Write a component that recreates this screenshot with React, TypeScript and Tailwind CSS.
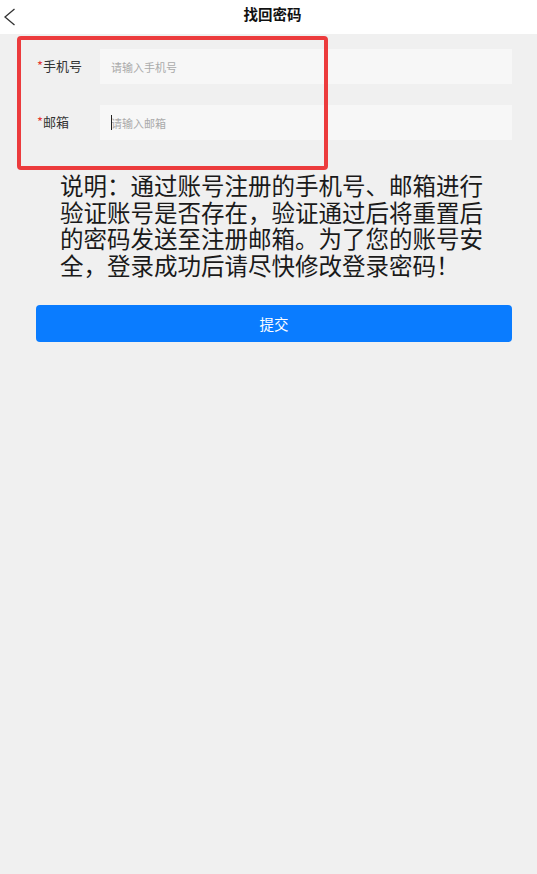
import React from "react";

const font = { fontFamily: '"Noto Sans CJK SC", "Noto Sans", sans-serif' };

function Field({ label, placeholder, focused }: { label: string; placeholder: string; focused?: boolean }) {
  return (
    <div className="flex items-center pl-[37px] pr-[25px]">
      <div className="w-[63px] shrink-0 pb-[3px] text-[13px] leading-none text-[#333]">
        <span className="text-[#e53935]">*</span>
        {label}
      </div>
      <div className="relative h-[35px] flex-1 bg-[#f7f7f7]">
        <input
          className="h-full w-full bg-transparent px-[11px] text-[11px] text-[#333] outline-none placeholder:text-[#aaaaaa]"
          placeholder={placeholder}
          style={font}
        />
        {focused && <span className="absolute left-[11px] top-[10px] h-[15px] w-px bg-[#222]" />}
      </div>
    </div>
  );
}

export default function App() {
  return (
    <div className="relative min-h-[874px] bg-[#f0f0f0]" style={font}>
      {/* nav bar */}
      <header className="grid h-[34px] grid-cols-[1fr_auto_1fr] items-center bg-white">
        <button className="flex h-full items-center pl-[3px]" aria-label="返回">
          <svg width="13" height="18" viewBox="0 0 13 18" fill="none">
            <polyline points="11.5,1 2,9 11.5,17" stroke="#333" strokeWidth="1.3" strokeLinejoin="miter" />
          </svg>
        </button>
        <h1 className="ml-[8px] pb-[6px] text-[14.5px] font-bold text-[#111]">找回密码</h1>
        <div />
      </header>

      <div className="flex flex-col gap-[21px] pt-[15px]">
        <Field label="手机号" placeholder="请输入手机号" />
        <Field label="邮箱" placeholder="请输入邮箱" focused />
      </div>

      <p className="ml-[60px] mt-[32px] w-[430px] text-[23.5px] leading-[26.5px] text-[#1a1a1a]">
        说明：通过账号注册的手机号、邮箱进行验证账号是否存在，验证通过后将重置后的密码发送至注册邮箱。为了您的账号安全，登录成功后请尽快修改登录密码！
      </p>

      <div className="mt-[27px] pl-[36px] pr-[25px]">
        <button className="h-[37px] w-full rounded-[4px] bg-[#0a7cff] text-[14.5px] text-white">提交</button>
      </div>

      {/* annotation frame */}
      <div className="pointer-events-none absolute left-[17px] top-[36px] h-[134px] w-[311px] rounded-[4px] border-4 border-[#ec3b3d]" />
    </div>
  );
}
